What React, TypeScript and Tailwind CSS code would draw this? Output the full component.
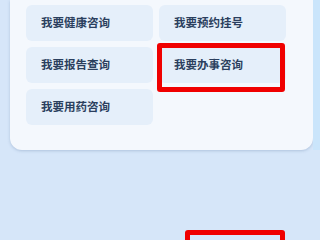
import React from 'react';

const items = ['我要健康咨询', '我要预约挂号', '我要报告查询', '我要办事咨询', '我要用药咨询'];

const App: React.FC = () => {
  return (
    <div
      className="relative w-[320px] h-[240px] overflow-hidden bg-[#d6e6f9]"
      style={{ fontFamily: '"Noto Sans CJK SC", "Noto Sans", sans-serif' }}
    >
      <div className="flex">
        <div className="ml-[10px] w-[303px] bg-[#f4f8fd] rounded-b-[12px] shadow-[0_1px_3px_rgba(100,130,170,0.35)] pt-[5px] pb-[17px] pl-[16px]">
          <div className="grid grid-cols-[127px_127px] gap-[6px]">
            {items.map(item => (
              <div
                key={item}
                className="h-[36px] rounded-[6px] bg-[#e5effa] flex items-center pl-[15px] text-[11.5px] font-bold text-[#2b3f5e]"
              >
                {item}
              </div>
            ))}
          </div>
        </div>
        <div className="ml-auto w-[7px] h-[150px] bg-[#cae5fb]" />
      </div>

      <div className="absolute left-[157px] top-[43px] w-[128px] h-[49px] border-[5px] border-[#f00000] rounded-[3px]" />
      <div className="absolute left-[185px] top-[230px] w-[100px] h-[30px] border-[5px] border-[#f00000] rounded-[3px]" />
    </div>
  );
};

export default App;
